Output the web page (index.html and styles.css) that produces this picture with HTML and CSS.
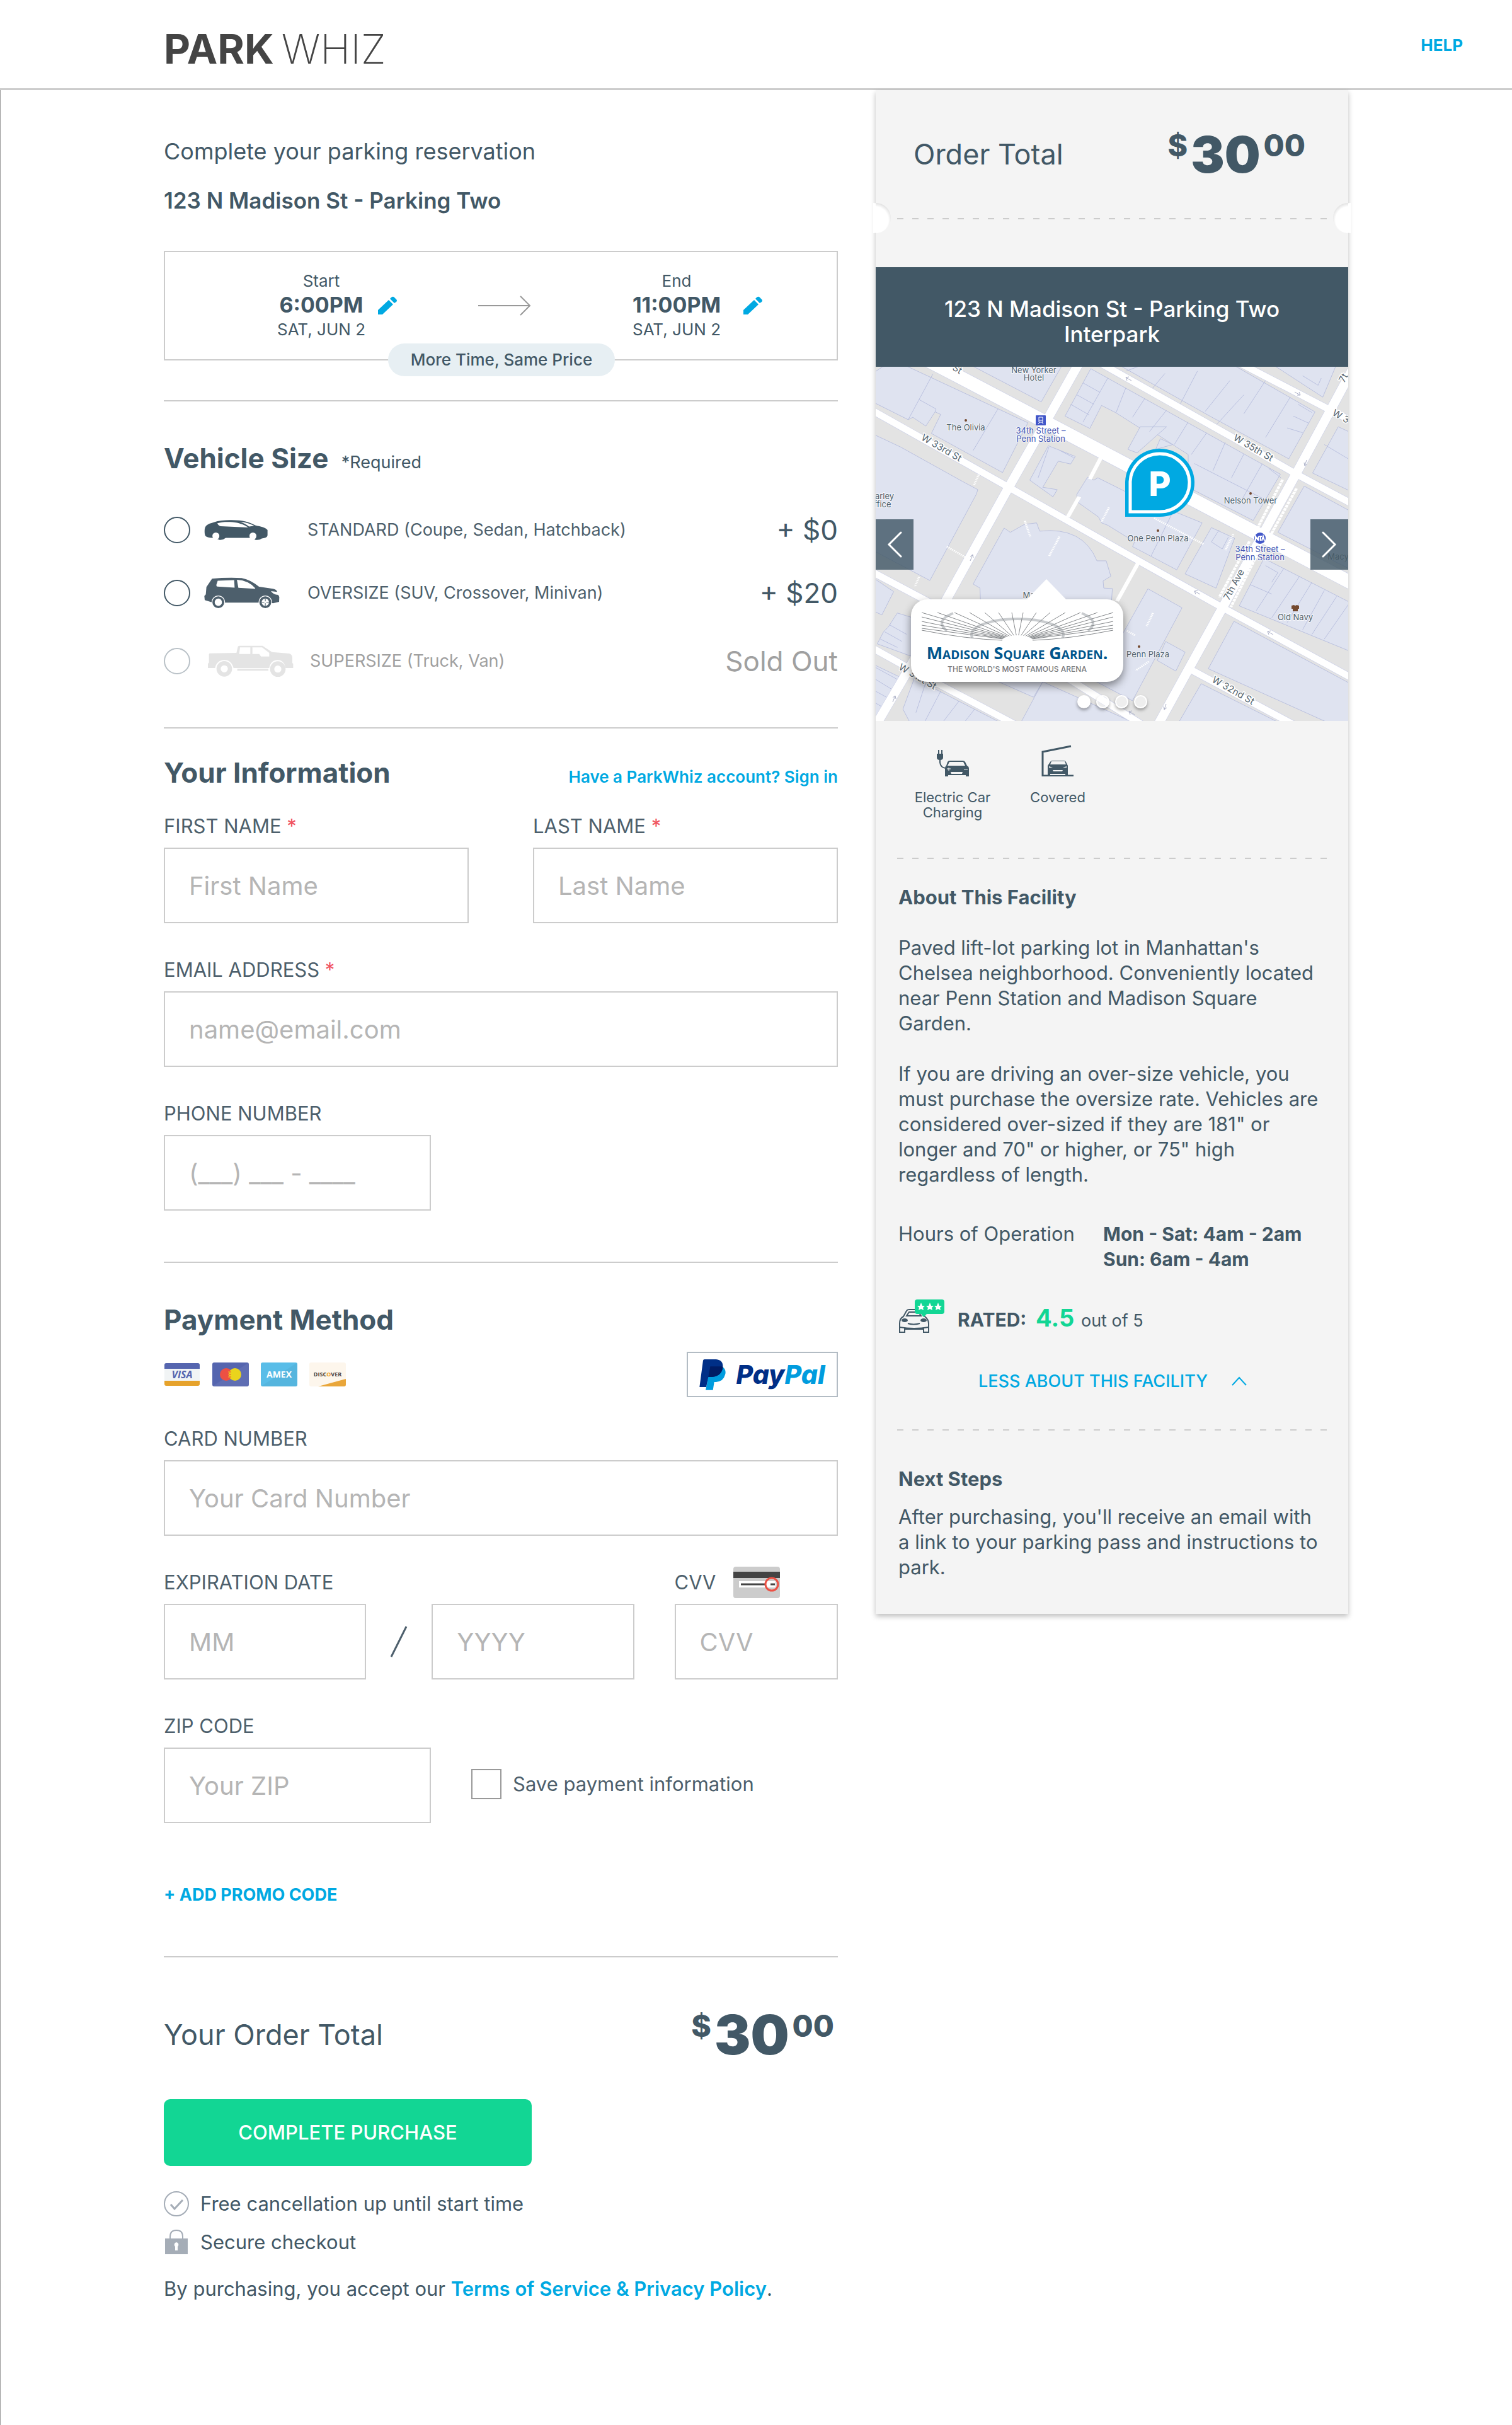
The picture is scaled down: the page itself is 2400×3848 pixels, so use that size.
FILE: index.html
```html
<!DOCTYPE html>
<html lang="en">
<head>
<meta charset="utf-8">
<meta name="viewport" content="width=device-width, initial-scale=1">
<title>ParkWhiz - Complete your parking reservation</title>
<link rel="stylesheet" href="styles.css">
</head>
<body>
<header class="site-header">
  <a class="logo" href="#"><span class="logo-park">PARK</span><span class="logo-whiz">WHIZ</span></a>
  <a class="help" href="#">HELP</a>
</header>

<main class="page">
  <form class="checkout">
    <h1 class="title">Complete your parking reservation</h1>
    <p class="address">123 N Madison St - Parking Two</p>

    <section class="times">
      <div class="stop">
        <div class="stop-text"><span class="stop-label">Start</span><strong class="stop-time">6:00PM</strong><span class="stop-date">SAT, JUN 2</span></div>
        <button class="edit" type="button" aria-label="Edit start time"><svg viewBox="0 0 32 30" width="32" height="30"><path fill="#00a9e2" d="M1 29V22L18 6L25 13L8 29ZM20 4L22 2Q24 0 26 1L30 5Q32 7 30 9L27 11Z"/></svg></button>
      </div>
      <svg class="arrow" viewBox="0 0 84 32" width="84" height="32"><path d="M0 16H82M67 1L82 16L67 31" fill="none" stroke="#999" stroke-width="2"/></svg>
      <div class="stop stop-end">
        <div class="stop-text"><span class="stop-label">End</span><strong class="stop-time">11:00PM</strong><span class="stop-date">SAT, JUN 2</span></div>
        <button class="edit" type="button" aria-label="Edit end time"><svg viewBox="0 0 32 30" width="32" height="30"><path fill="#00a9e2" d="M1 29V22L18 6L25 13L8 29ZM20 4L22 2Q24 0 26 1L30 5Q32 7 30 9L27 11Z"/></svg></button>
      </div>
      <span class="pill">More Time, Same Price</span>
    </section>

    <section class="section vehicles">
      <h2>Vehicle Size <small>*Required</small></h2>
      <label class="vehicle">
        <input type="radio" name="vehicle" value="standard">
        <span class="vehicle-icon"><svg viewBox="222 76 308 98" width="102" height="32"><path fill="#425866" d="M222 130C222 100 238 96 265 88C290 79 320 77 345 77C405 76 440 86 470 103C495 108 520 114 528 125V150Q528 163 500 166Q490 175 470 173L455 163H325Q310 175 295 173L270 163Q240 165 228 156Q222 150 222 130Z"/><path fill="#fff" d="M284 92C310 84 350 84 380 90C405 96 425 105 433 113L300 107Q290 105 284 92ZM394 85C422 87 445 95 464 105L438 108C425 97 408 89 394 85Z"/><circle cx="277" cy="154" r="17" fill="#fff"/><circle cx="457" cy="154" r="17" fill="#fff"/></svg></span>
        <span class="vehicle-name">STANDARD (Coupe, Sedan, Hatchback)</span><span class="vehicle-price">+ $0</span>
      </label>
      <label class="vehicle">
        <input type="radio" name="vehicle" value="oversize">
        <span class="vehicle-icon"><svg viewBox="225 346 362 150" width="120" height="50"><path fill="#4d5f6c" d="M263 352Q330 346 405 349Q450 358 488 391L555 401Q572 404 575 416L545 412Q555 429 580 430L585 440L584 463L555 470L540 467H285L260 465L228 455L226 435L233 428L236 392Z"/><path fill="#fff" d="M290 362L369 359L371 395L288 390Q282 388 284 380ZM382 358Q435 360 470 398L468 401L389 396Z"/><g fill="#fff"><circle cx="293" cy="465" r="32"/><circle cx="518" cy="465" r="32"/></g><g fill="#fff" stroke="#4d5f6c" stroke-width="11"><circle cx="293" cy="465" r="23"/><circle cx="518" cy="465" r="23"/></g><path stroke="#4d5f6c" stroke-width="3" d="M518 448V482M501 465H535"/><circle cx="518" cy="465" r="5" fill="#fff"/></svg></span>
        <span class="vehicle-name">OVERSIZE (SUV, Crossover, Minivan)</span><span class="vehicle-price">+ $20</span>
      </label>
      <label class="vehicle sold-out">
        <input type="radio" name="vehicle" value="supersize" disabled>
        <span class="vehicle-icon"><svg viewBox="238 670 408 150" width="136" height="50"><path fill="#e4e4e4" d="M246 708L374 706L381 676Q383 672 390 672H498L543 702L625 709Q640 714 640 730V754L644 758V778H608Q600 740 570 740Q536 742 530 778H360Q350 740 316 740Q280 742 272 778H238V758L243 752V712ZM391 680L387 711H440V680ZM450 680V711H482L491 723H530V706L496 680ZM378 782H526V791H378Z" fill-rule="evenodd"/><g fill="#fff" stroke="#e4e4e4" stroke-width="20"><circle cx="316" cy="782" r="27"/><circle cx="571" cy="783" r="27"/></g></svg></span>
        <span class="vehicle-name">SUPERSIZE (Truck, Van)</span><span class="vehicle-price">Sold Out</span>
      </label>
    </section>

    <section class="section info">
      <div class="section-head"><h2>Your Information</h2><a class="signin" href="#">Have a ParkWhiz account? Sign in</a></div>
      <div class="row split">
        <div class="field"><label for="first">FIRST NAME <em>*</em></label><input id="first" type="text" placeholder="First Name"></div>
        <div class="field"><label for="last">LAST NAME <em>*</em></label><input id="last" type="text" placeholder="Last Name"></div>
      </div>
      <div class="row"><div class="field"><label for="email">EMAIL ADDRESS <em>*</em></label><input id="email" type="email" placeholder="name@email.com"></div></div>
      <div class="row"><div class="field medium"><label for="phone">PHONE NUMBER</label><input id="phone" type="tel" placeholder="(___) ___ - ____"></div></div>
    </section>

    <section class="section payment">
      <h2>Payment Method</h2>
      <div class="methods">
        <div class="cards">
          <svg viewBox="0 0 58 38" width="58" height="38"><rect x="1" y="1" width="56" height="36" rx="3" fill="#f1f4f5"/><path fill="#5565af" d="M1 10V4Q1 1 4 1H54Q57 1 57 4V10Z"/><path fill="#e6a22b" d="M1 29V34Q1 37 4 37H54Q57 37 57 34V29Z"/><text x="29" y="25" class="brand-visa">VISA</text></svg>
          <svg viewBox="0 0 58 38" width="58" height="38"><rect width="58" height="38" rx="3" fill="#5565af"/><path fill="#fff" opacity=".06" d="M58 0V38H0Z"/><circle cx="22" cy="19" r="10" fill="#ec5044"/><circle cx="36" cy="19" r="10" fill="#ead41c"/><path d="M25 15H30M25 19H30M25 23H30" stroke="#f08a2c" stroke-width="2"/></svg>
          <svg viewBox="0 0 58 38" width="58" height="38"><rect width="58" height="38" rx="3" fill="#59bde8"/><path fill="#000" opacity=".04" d="M58 0V38H0Z"/><text x="29" y="24" class="brand-amex">AMEX</text></svg>
          <svg viewBox="0 0 58 38" width="58" height="38"><rect width="58" height="38" rx="3" fill="#fdf6ec"/><path fill="#e9a63a" d="M58 26V35Q58 38 55 38H14Z"/><text x="29" y="22" class="brand-discover">DISC<tspan fill="#eda12c">O</tspan>VER</text></svg>
        </div>
        <button class="paypal" type="button" aria-label="PayPal">
          <svg viewBox="75 52 126 147" width="42" height="49"><path fill="#009cde" d="M122 92L186 88Q205 102 198 125Q190 157 155 160H146L140 198H105L112 165Z"/><path fill="#002f87" d="M93 57Q94 52 100 52H155Q190 55 187 90Q182 132 135 136H118L108 184H76Z"/><path fill="#001c64" d="M127 86H184Q187 88 187 92Q180 132 135 136H118Z"/></svg>
          <span class="paypal-name"><span>Pay</span><span class="pal">Pal</span></span>
        </button>
      </div>
      <div class="row card-row"><div class="field"><label for="card">CARD NUMBER</label><input id="card" type="text" placeholder="Your Card Number"></div></div>
      <div class="row expiry">
        <div class="field"><label for="mm">EXPIRATION DATE</label><input id="mm" type="text" placeholder="MM"></div>
        <svg class="slash" viewBox="0 0 28 50" width="28" height="50"><path d="M2 49L26 1" stroke="#4d5f6c" stroke-width="3"/></svg>
        <div class="field"><input id="yyyy" type="text" placeholder="YYYY" aria-label="Expiration year"></div>
        <div class="field cvv">
          <label for="cvv">CVV <svg viewBox="0 0 74 50" width="74" height="50"><rect width="74" height="50" rx="4" fill="#ccc"/><rect y="8" width="74" height="10" fill="#444"/><rect x="9" y="23" width="58" height="10" fill="#fff"/><path d="M12 28H50M59 28H66" stroke="#444" stroke-width="3"/><circle cx="61" cy="28" r="10" fill="none" stroke="#ec5044" stroke-width="3"/></svg></label>
          <input id="cvv" type="text" placeholder="CVV">
        </div>
      </div>
      <div class="row zip-row">
        <div class="field medium"><label for="zip">ZIP CODE</label><input id="zip" type="text" placeholder="Your ZIP"></div>
        <label class="save"><input type="checkbox"> Save payment information</label>
      </div>
      <a class="promo" href="#">+ ADD PROMO CODE</a>
    </section>

    <section class="section finish">
      <div class="total"><span class="total-label">Your Order Total</span><span class="price"><sup>$</sup><b>30</b><sup>00</sup></span></div>
      <button class="purchase" type="submit">COMPLETE PURCHASE</button>
      <p class="note"><svg viewBox="0 0 40 40" width="40" height="40"><g fill="none" stroke="#a5adb7" stroke-width="2"><circle cx="20" cy="20" r="19"/><path d="M11 21L17 28L30 14" stroke-width="3"/></g></svg>Free cancellation up until start time</p>
      <p class="note"><svg viewBox="0 0 40 40" width="40" height="40"><path d="M10 15V11Q10 1 20 1T30 11V15" fill="none" stroke="#a5adb7" stroke-width="2"/><path fill="#a5adb7" d="M2 14H38V39H2Z"/><path fill="#fff" d="M20 20A4 4 0 0 1 22 27V33H18V27A4 4 0 0 1 20 20Z"/></svg>Secure checkout</p>
      <p class="terms">By purchasing, you accept our <a href="#">Terms of Service &amp; Privacy Policy</a>.</p>
    </section>
  </form>

  <aside class="ticket">
    <div class="ticket-total"><span class="total-label">Order Total</span><span class="price"><sup>$</sup><b>30</b><sup>00</sup></span></div>
    <div class="tear"><span class="notch"></span><span class="dashes"></span><span class="notch notch-right"></span></div>
    <h2 class="ticket-name">123 N Madison St - Parking Two<br>Interpark</h2>

    <div class="map">
      <svg class="map-art" viewBox="0 0 750 562" preserveAspectRatio="xMidYMid slice">
        <rect width="750" height="562" fill="#e3e3e3"/>
        <g transform="scale(.4911 .3764) translate(-20 -32)">
          <g fill="#dfe3f0" stroke="#b4bbdc" stroke-width="2">
            <path d="M10 60L42 32L105 20L512 268L430 478L200 313L230 233L212 222L182 282L140 245L125 255L10 180Z"/>
            <path d="M320 20H625L555 180Z"/>
            <path d="M715 40L1328 485L1240 680L1030 540V402L980 360L910 300L880 295L795 225L750 195L712 292L632 240Z"/>
            <path d="M800 20H1170L1440 222L1355 420L1100 240Z"/>
            <path d="M1300 20H1510L1465 160Z"/>
            <path d="M1515 285L1560 312V560L1432 480Z"/>
            <path d="M1405 535L1560 645V890L1320 730Z"/>
            <path d="M10 315L43 335L100 370L300 515L350 550L345 570L195 933L10 805Z"/>
            <path d="M435 712L455 730L500 697L540 690L550 725Q690 705 735 850H765L780 915L755 935L757 965L785 967L780 1060H360L357 965L335 948Z"/>
            <path d="M705 497L725 510L738 500L830 560L1075 690L993 888L850 790L857 770L770 700L750 690L740 665L672 602L670 570Z"/>
            <path d="M578 365L665 410L650 442L610 430L560 540L607 550L593 580L518 510Z"/>
            <path d="M1105 710L1180 755L1120 965L1020 905Z"/>
            <path d="M1275 840L1560 1030V1235L1195 1040Z"/>
            <path d="M1178 1105L1560 1372V1530L1478 1530L1095 1305Z"/>
            <path d="M1072 1368L1320 1530H1000Z"/>
            <path d="M900 968L1010 1048L850 1440L560 1240L800 1200Z"/>
            <path d="M10 920L78 980L40 1078L10 1060Z"/>
            <path d="M90 1070L240 1130L400 1300L560 1360L530 1425L400 1350L130 1250L25 1200L45 1150L60 1130Z"/>
            <path d="M10 1285L98 1340L20 1510H10Z"/>
            <path d="M145 1345L420 1530H130L108 1475Z"/>
            <path d="M560 1360L850 1530H490Z"/>
            <path d="M957 1190L1020 1235L990 1315L930 1270Z"/>
            <path d="M960 285L865 395L835 380L875 285ZM940 335L980 360L925 380Z"/>
            <path fill="none" d="M205 62L125 255M415 210L335 385M160 170L215 210L212 222M770 80L690 265M690 100L745 140M670 150L725 190M650 190L710 235M828 122L797 225M890 165L850 245M960 215L905 305M1030 265L985 360M1090 310L1040 402M1150 350L1110 470M1210 400L1170 500M1050 440L1290 600M1270 440L1200 600M1290 460L1330 500M890 20L830 50M955 60L910 130M1060 50L1000 200M1165 90L1085 220M1210 150L1115 285M1280 90L1210 230M1360 160L1280 330M1385 190L1430 225M1370 240L1420 270M1350 290L1400 310M1400 70L1450 110L1460 80M1470 360L1560 430M580 370L545 500M615 385L660 415M860 560L830 650M980 645L910 830M1130 720L1105 770L1140 800L1160 750M1340 880L1250 1060M1390 915L1300 1090M1430 940L1350 1110M1470 975L1400 1140M1510 1000L1430 1160M1550 1030L1470 1180M1280 870L1320 900L1300 940M1230 950L1300 990M65 1120L120 1160M50 1150L105 1190M35 1180L90 1215M180 1370L150 1490M230 1400L180 1525M290 1440L240 1525M340 1475L310 1525M20 1300L90 1350M20 1350L70 1390M20 1400L55 1425M20 1450L40 1465"/>
          </g>
          <g fill="none" stroke="#d0d4e8">
            <path stroke-width="56" d="M180 0L240 40L1560 945"/>
            <path stroke-width="30" d="M10 217L450 540L870 850L1145 1050L1560 1345M740 12L1180 335L1380 485L1560 610M1190 12L1490 215L1560 262M10 898L230 1050L640 1345L880 1540M1040 1310L1370 1540M10 1218L130 1305L470 1540"/>
            <path stroke-width="34" d="M680 10L585 230L450 540L250 1010L130 1300L22 1540M1560 45L1490 215L1380 480L1140 1050L1030 1310L933 1540"/>
          </g>
          <g fill="none" stroke="#fff">
            <path stroke-width="52" d="M180 0L240 40L1560 945"/>
            <path stroke-width="26" d="M10 217L450 540L870 850L1145 1050L1560 1345M740 12L1180 335L1380 485L1560 610M1190 12L1490 215L1560 262M10 898L230 1050L640 1345L880 1540M1040 1310L1370 1540M10 1218L130 1305L470 1540"/>
            <path stroke-width="31" d="M680 10L585 230L450 540L250 1010L130 1300L22 1540M1560 45L1490 215L1380 480L1140 1050L1030 1310L933 1540"/>
            <path stroke-width="13" d="M870 855L800 1020M752 405L712 505M678 580L641 665"/>
            <path stroke-width="9" stroke-dasharray="12 3" d="M1335 508L1255 710M1380 545L1295 745M1228 768L1130 1005M1262 800L1168 1045"/>
            <path stroke-width="7" stroke-dasharray="4 3" d="M353 487L338 530M502 682L520 750M614 748L580 832M774 625L750 685M920 670L1080 780M250 790L310 835M160 918L147 958M916 1070L896 1125M1176 738L1150 805M832 1145L860 1165M903 1275L860 1312"/>
          </g>
        </g>
        <g fill="none" stroke="#a9aec6" stroke-width="1">
          <path d="M397 17L406 22M397 17L402 16M397 17L399 22M665 40L674 45M674 45L669 45M674 45L672 40M684 148L681 157M681 157L680 152M681 157L685 154M150 308L154 298M154 298L150 301M154 298L155 303M506 356L515 361M506 356L511 355M506 356L508 361M622 420L631 425M622 420L627 419M622 420L624 425M461 535L458 544M458 544L457 539M458 544L462 541M27 532L31 522M31 522L27 525M31 522L32 527M402 547L411 552M402 547L407 546M402 547L404 552"/>
        </g>
        <g class="poi">
          <text x="251" y="10">New Yorker</text><text x="251" y="22">Hotel</text>
          <text x="143" y="101">The Olivia</text><text x="448" y="277">One Penn Plaza</text>
          <text x="595" y="217">Nelson Tower</text><text x="666" y="402">Old Navy</text>
          <text x="432" y="461">Penn Plaza</text><text x="14" y="210">arley</text><text x="11" y="223">ffice</text>
          <text x="243" y="367">Ma</text><text x="734" y="306">Macy</text>
        </g>
        <g class="poi station"><text x="262" y="106">34th Street –</text><text x="262" y="119">Penn Station</text><text x="610" y="294">34th Street –</text><text x="610" y="307">Penn Station</text></g>
        <g class="street">
          <text transform="translate(102 133) rotate(30)">W 33rd St</text><text transform="translate(597 133) rotate(30)">W 35th St</text>
          <text transform="translate(565 518) rotate(30)">W 32nd St</text><text transform="translate(64 496) rotate(30)">W 31st St</text>
          <text transform="translate(736 83) rotate(30)">W 3</text><text transform="translate(127 8) rotate(30)">St</text>
          <text transform="translate(573 348) rotate(-62)">7th Ave</text><text transform="translate(747 20) rotate(-62)">7t</text>
        </g>
        <g fill="#74492e"><circle cx="143" cy="85" r="2"/><circle cx="448" cy="260" r="2"/><circle cx="595" cy="201" r="2"/><circle cx="418" cy="444" r="2"/><path d="M660 379L664 378Q666 380 668 378L672 379L672 384H670V388H662V384H660Z"/></g>
        <rect x="254" y="77" width="16" height="16" rx="1" fill="#4257c9"/><path fill="none" stroke="#fff" d="M259 80H265V88H259ZM259 85H265M260 88L258 91M264 88L266 91"/>
        <circle cx="610" cy="272" r="9" fill="#4257c9"/><path fill="none" stroke="#fff" stroke-width="2" d="M603 276V269L606 274L608 269V276M609 269H613M611 269V276M613 276L615 269L617 276"/>
        <g><path fill="#00a9e2" d="M396 238V184A55 54 0 1 1 451 238Z"/><path fill="none" stroke="#fff" stroke-width="5" d="M404 230V185A47 46 0 1 1 451 230Z"/><text class="pin-letter" x="451" y="205">P</text></g>
      </svg>
      <div class="venue">
        <svg viewBox="0 0 304 46" width="304" height="46">
          <g fill="none" stroke="#c9cccf" stroke-width="4"><ellipse cx="152" cy="36" rx="73" ry="25"/><path d="M50 2Q20 14 40 30M254 2Q284 14 264 30"/></g>
          <path stroke="#85888b" stroke-width="1" fill="none" d="M152 46L0 1M152 46L25 1M152 46L52 1M152 46L76 1M152 46L100 1M152 46L122 1M152 46L143 1M152 46L161 1M152 46L182 1M152 46L204 1M152 46L228 1M152 46L252 1M152 46L279 1M152 46L304 1M152 46L0 8M152 46L304 8M152 46L0 15M152 46L304 15M152 46L0 21M152 46L304 21M152 46L0 26M152 46L304 26"/>
          <ellipse cx="152" cy="46" rx="25" ry="9" fill="#fff"/>
          <path fill="#fff" d="M0 29Q70 43 128 45H176Q234 43 304 29V46H0Z"/>
          <path fill="none" stroke="#85888b" d="M0 29Q70 43 128 45M304 29Q234 43 176 45"/>
        </svg>
        <span class="venue-name">Madison Square Garden.</span>
        <span class="venue-tag">THE WORLD'S MOST FAMOUS ARENA</span>
      </div>
      <button class="slide prev" type="button" aria-label="Previous photo"><svg viewBox="0 0 24 44" width="24" height="44"><path d="M22 3L3 22L22 41" fill="none" stroke="#fff" stroke-width="3" stroke-linecap="round"/></svg></button>
      <button class="slide next" type="button" aria-label="Next photo"><svg viewBox="0 0 24 44" width="24" height="44"><path d="M2 3L21 22L2 41" fill="none" stroke="#fff" stroke-width="3" stroke-linecap="round"/></svg></button>
      <div class="dots"><i class="on"></i><i></i><i></i><i></i></div>
    </div>

    <ul class="amenities">
      <li><svg viewBox="0 0 52 50" width="52" height="50"><g fill="none" stroke="#425866" stroke-width="2"><path d="M4 8V15M9 8V15"/><path d="M6 22V28Q7 36 15 37"/></g><path fill="#425866" d="M1 14H11V20Q11 24 6 24T1 20ZM18 27Q19 25 22 25H42Q45 25 46 27L49 33Q52 34 52 38V50H47V48H19V50H14V38Q14 34 16 33Z"/><path fill="#f4f4f4" d="M21 27H43L46 33H18ZM23 43H42L41 46H24ZM44 38H50V39H44Z"/><path stroke="#f4f4f4" d="M20 36V41M17 38H23"/></svg>Electric Car<br>Charging</li>
      <li><svg viewBox="0 0 52 50" width="52" height="50"><path fill="none" stroke="#425866" stroke-width="3" d="M47 2L2 11V49H51"/><path fill="#425866" d="M14 27Q15 25 17 25H36Q38 25 39 27L42 33V50H10V33Z"/><path fill="#f4f4f4" d="M16 26H37L39 31H14ZM14 46H38V48H14ZM18 40H34L33 42H19ZM12 34L18 36H12ZM40 34L34 36H40Z"/></svg>Covered</li>
    </ul>
    <span class="dashes"></span>
    <section class="about">
      <h3>About This Facility</h3>
      <p>Paved lift-lot parking lot in Manhattan's<br>Chelsea neighborhood. Conveniently located<br>near Penn Station and Madison Square<br>Garden.</p>
      <p>If you are driving an over-size vehicle, you<br>must purchase the oversize rate. Vehicles are<br>considered over-sized if they are 181" or<br>longer and 70" or higher, or 75" high<br>regardless of length.</p>
      <dl class="hours"><dt>Hours of Operation</dt><dd>Mon - Sat: 4am - 2am<br>Sun: 6am - 4am</dd></dl>
      <div class="rating">
        <svg viewBox="0 0 74 54" width="74" height="54"><g fill="none" stroke="#425866" stroke-width="2"><path d="M8 27L13 18Q14 16 17 16H33Q36 16 38 19L42 27Q48 32 48 38V52H40V47H10V52H2V38Q2 30 8 27ZM13 26L17 20H32L36 26Z"/><path d="M2 44Q25 48 48 44M15 38Q24 41 34 38"/></g><ellipse cx="10" cy="33" rx="5" ry="3" fill="#425866"/><ellipse cx="40" cy="33" rx="5" ry="3" fill="#425866"/><path fill="#12d694" d="M30 0H69Q73 0 73 4V19Q73 23 69 23H45L40 28L36 23H30Q26 23 26 19V4Q26 0 30 0Z"/><path fill="#fff" d="M36 5L38 10H42L39 13L40 17L36 15L32 17L33 13L30 10H34ZM50 5L52 10H56L53 13L54 17L50 15L46 17L47 13L44 10H48ZM63 5L65 10H69L66 13L67 17L63 15L59 17L60 13L57 10H61Z"/></svg>
        <span class="rating-text"><b>RATED:</b> <strong>4.5</strong> <small>out of 5</small></span>
      </div>
      <button class="less" type="button">LESS ABOUT THIS FACILITY<svg viewBox="0 0 24 16" width="24" height="16"><path d="M1 14L12 2L23 14" fill="none" stroke="#00a9e2" stroke-width="2"/></svg></button>
    </section>
    <span class="dashes"></span>
    <section class="next-steps">
      <h3>Next Steps</h3>
      <p>After purchasing, you'll receive an email with<br>a link to your parking pass and instructions to<br>park.</p>
    </section>
  </aside>
</main>
</body>
</html>
```
FILE: styles.css
```css
:root {
  --ink: #425866;
  --ink-soft: #4d5f6c;
  --blue: #00a9e2;
  --green: #12d694;
  --line: #ccc;
}

* { box-sizing: border-box; }

body {
  margin: 0;
  background: #fff;
  color: var(--ink);
  font: 400 31px/40px Inter, "Liberation Sans", sans-serif;
}

h1, h2, h3, p, ul, dl, dd { margin: 0; padding: 0; }
a { color: var(--blue); text-decoration: none; }
button { font: inherit; color: inherit; border: 0; padding: 0; background: none; cursor: pointer; }
svg { display: block; flex: none; }

/* Header */
.site-header {
  display: flex;
  justify-content: space-between;
  align-items: flex-start;
  height: 143px;
  padding: 44px 78px 0 260px;
  border-bottom: 3px solid var(--line);
}
.logo { display: flex; gap: 12px; font-size: 65px; line-height: 68px; color: #444; }
.logo-park { font-weight: 700; }
.logo-whiz { font-weight: 200; }
.help { font-size: 26px; line-height: 56px; font-weight: 700; }

/* Page */
.page {
  display: grid;
  grid-template-columns: minmax(0, 1070fr) minmax(0, 750fr);
  gap: 60px;
  align-items: start;
  min-height: calc(100vh - 143px);
  padding: 0 260px 185px 259px;
  border-left: 1px solid #999;
}
.checkout { padding-top: 77px; }
.title { font-size: 36px; line-height: 40px; font-weight: 400; }
.address { margin-top: 38px; font-size: 35px; line-height: 40px; font-weight: 600; }

.times {
  position: relative;
  display: flex;
  align-items: center;
  justify-content: space-between;
  height: 174px;
  margin: 60px 0 63px;
  padding: 0 117px 0 173px;
  border: 2px solid var(--line);
}
.stop { display: flex; align-items: center; gap: 14px; }
.stop-end { gap: 30px; }
.stop-text { display: flex; flex-direction: column; width: 150px; text-align: center; white-space: nowrap; }
.stop-label { font-size: 26px; line-height: 34px; }
.stop-time { font-size: 34px; line-height: 42px; font-weight: 700; }
.stop-date { font-size: 26px; line-height: 36px; }
.arrow { margin-right: 28px; }
.pill {
  position: absolute;
  left: 50%;
  bottom: -27px;
  width: 360px;
  margin-left: -179px;
  border-radius: 26px;
  background: #e7eff3;
  font-size: 26px;
  line-height: 52px;
  font-weight: 500;
  text-align: center;
}

/* Sections */
.section { border-top: 2px solid var(--line); }
h2 { font-size: 44px; line-height: 48px; font-weight: 700; }
h2 small { margin-left: 10px; font-size: 27px; line-height: 28px; font-weight: 400; }
.section-head { display: flex; justify-content: space-between; align-items: baseline; }

.vehicles { padding: 66px 0 47px; }
.vehicle { display: flex; align-items: center; height: 100px; }
.vehicles h2 { margin-bottom: 40px; }
.vehicle.sold-out { height: 116px; }
.vehicle input {
  appearance: none;
  width: 42px;
  height: 42px;
  margin: 0 22px 0 0;
  border: 2px solid var(--ink);
  border-radius: 50%;
}
.vehicle-icon { width: 164px; }
.vehicle-name { flex: 1; font-size: 27px; color: var(--ink-soft); }
.vehicle-price { font-size: 44px; }
.sold-out input { margin-right: 28px; border-color: #b9c1c7; }
.sold-out .vehicle-icon { width: 162px; }
.sold-out .vehicle-name, .sold-out .vehicle-price { color: #a0a0a0; }

.info { padding: 46px 0 81px; }
.signin { font-size: 26px; line-height: 32px; font-weight: 600; }

/* Form fields */
.row { display: flex; margin-top: 56px; }
.section-head + .row { margin-top: 43px; }
.split { gap: 102px; }
.field { flex: 1; min-width: 0; display: flex; flex-direction: column; gap: 16px; }
.field.medium { flex: 0 0 424px; }
.field label { height: 36px; font-size: 31px; line-height: 36px; color: var(--ink-soft); }
.field label em { color: #f0525f; font-style: normal; }
.field input {
  width: 100%;
  height: 120px;
  padding: 0 38px;
  border: 2px solid var(--line);
  border-radius: 0;
  background: #fff;
  color: var(--ink);
  font: inherit;
  font-size: 40px;
}
.field input::placeholder { color: #b5b5b5; opacity: 1; }

/* Payment */
.payment { padding: 66px 0 81px; }
.methods { display: flex; justify-content: space-between; align-items: center; margin-top: 27px; }
.cards { display: flex; gap: 19px; }
.brand-visa, .brand-amex, .brand-discover { font-family: "Open Sans", sans-serif; font-weight: 700; text-anchor: middle; }
.brand-visa { font-size: 16px; font-style: italic; fill: #5565af; }
.brand-amex { font-size: 14px; fill: #fff; }
.brand-discover { font-size: 9px; fill: #444; }
.paypal {
  display: flex;
  align-items: center;
  justify-content: center;
  gap: 16px;
  width: 240px;
  height: 72px;
  border: 2px solid #b3bcc4;
  background: #fff;
}
.paypal-name { font-size: 41px; line-height: 50px; font-weight: 800; font-style: italic; color: #002f87; }
.paypal-name .pal { color: #009cde; }
.row.card-row { margin-top: 48px; }
.expiry { align-items: flex-end; }
.expiry .field { flex: 322 1 0; }
.expiry .slash { margin: 0 38px 35px; }
.expiry .field.cvv { flex: 260 1 0; margin-left: 64px; }
.cvv label { display: flex; align-items: center; gap: 28px; }
.zip-row { align-items: flex-end; gap: 64px; }
.save { display: flex; align-items: center; gap: 18px; height: 120px; padding-bottom: 4px; color: var(--ink-soft); }
.save input { appearance: none; width: 48px; height: 48px; margin: 0; border: 2px solid #999; background: #fff; }
.promo { display: block; margin-top: 98px; font-size: 27px; line-height: 32px; font-weight: 700; }

/* Order total and purchase */
.finish { padding-top: 83px; }
.total { display: flex; justify-content: space-between; align-items: center; height: 80px; padding-right: 6px; }
.total-label { font-size: 45px; line-height: 48px; }
.price { display: flex; align-items: flex-start; gap: 5px; font-weight: 900; }
.price b { font-size: 86px; line-height: 86px; font-weight: 900; }
.price sup { padding-top: 5px; font-size: 48px; line-height: 48px; font-weight: 800; }
.purchase {
  display: block;
  width: 584px;
  height: 106px;
  margin: 62px 0 40px;
  border-radius: 10px;
  background: var(--green);
  color: #fff;
  font-size: 31px;
  font-weight: 500;
}
.note { display: flex; align-items: center; gap: 18px; margin-bottom: 21px; }
.terms { margin-top: 34px; }
.terms a { font-weight: 600; }

/* Ticket */
.ticket { background: #f4f4f4; box-shadow: 0 4px 8px rgba(0, 0, 0, .25); }
.ticket-total { display: flex; justify-content: space-between; align-items: center; height: 203px; padding: 0 68px 0 60px; }
.ticket-total .price b { font-size: 80px; }
.tear { position: relative; height: 78px; }
.dashes {
  display: block;
  height: 2px;
  margin: 0 34px;
  background: repeating-linear-gradient(90deg, var(--line) 0 10px, transparent 10px 24px);
}
.notch {
  position: absolute;
  top: -24px;
  left: 0;
  width: 24px;
  height: 48px;
  border-radius: 0 24px 24px 0;
  background: radial-gradient(circle at -1px 27px, #fff 21px, #e2e2e2 27px);
  box-shadow: -4px 0 0 #fff;
}
.notch-right {
  left: auto;
  right: 0;
  border-radius: 24px 0 0 24px;
  background: radial-gradient(circle at 25px 27px, #fff 21px, #e2e2e2 27px);
  box-shadow: 4px 0 0 #fff;
}
.ticket-name { padding: 46px 0 32px; background: var(--ink); color: #fff; font-size: 35px; line-height: 40px; font-weight: 500; text-align: center; }

.map { position: relative; height: 562px; overflow: hidden; }
.map-art { width: 100%; height: 100%; }
.poi text { font-size: 13px; fill: #4f626e; text-anchor: middle; paint-order: stroke; stroke: #fff; stroke-width: 2px; stroke-opacity: .7; }
.station text { fill: #4257b4; }
.street text { font-size: 15px; fill: #56656f; text-anchor: middle; paint-order: stroke; stroke: #fff; stroke-width: 3px; }
.pin-letter { font-size: 54px; font-weight: 800; fill: #fff; text-anchor: middle; }
.slide { position: absolute; top: 242px; display: flex; align-items: center; justify-content: center; width: 60px; height: 80px; background: rgba(66, 88, 102, .82); }
.prev { left: 0; }
.next { right: 0; }
.dots { position: absolute; left: 320px; bottom: 20px; display: flex; gap: 9px; }
.dots i { width: 21px; height: 21px; border: 2px solid #fff; border-radius: 50%; background: rgba(255, 255, 255, .4); box-shadow: 0 3px 5px rgba(0, 0, 0, .35); }
.dots .on { background: #fff; }
.venue {
  position: absolute;
  left: 56px;
  top: 369px;
  display: flex;
  flex-direction: column;
  align-items: center;
  width: 337px;
  height: 131px;
  padding-top: 20px;
  border-radius: 26px;
  background: #fff;
  box-shadow: 0 6px 14px rgba(0, 0, 0, .45);
}
.venue::before { content: ""; position: absolute; left: 183px; top: -32px; width: 64px; height: 33px; background: #fff; clip-path: polygon(50% 0, 100% 100%, 0 100%); }
.venue-name { font-family: "Open Sans", sans-serif; font-size: 27px; line-height: 38px; font-weight: 700; font-variant: small-caps; color: #00558c; white-space: nowrap; }
.venue-tag { font-size: 12px; line-height: 14px; font-weight: 500; color: #77797c; }

.amenities { display: flex; gap: 27px; padding: 38px 0 60px 52px; list-style: none; font-size: 22px; line-height: 24px; text-align: center; }
.amenities li { width: 140px; white-space: nowrap; }
.amenities svg { margin: 0 auto 21px; }

h3 { font-size: 31px; line-height: 40px; font-weight: 700; }
.about { padding: 41px 34px 60px 36px; }
.about p { margin-top: 40px; white-space: nowrap; }
.hours { display: flex; gap: 40px; margin-top: 54px; white-space: nowrap; }
.hours dt { width: 285px; }
.hours dd { font-size: 30px; font-weight: 700; }
.rating { display: flex; align-items: center; gap: 20px; height: 54px; margin-top: 44px; }
.rating-text { padding-top: 8px; }
.rating-text b { font-size: 30px; }
.rating-text strong { margin: 0 2px 0 6px; font-size: 38px; color: var(--green); }
.rating-text small { font-size: 27px; }
.less { display: flex; align-items: center; gap: 38px; margin: 60px auto 0; font-size: 27px; line-height: 32px; font-weight: 500; color: var(--blue); }
.next-steps { padding: 57px 34px 54px 36px; }
.next-steps p { margin-top: 20px; white-space: nowrap; }
```
